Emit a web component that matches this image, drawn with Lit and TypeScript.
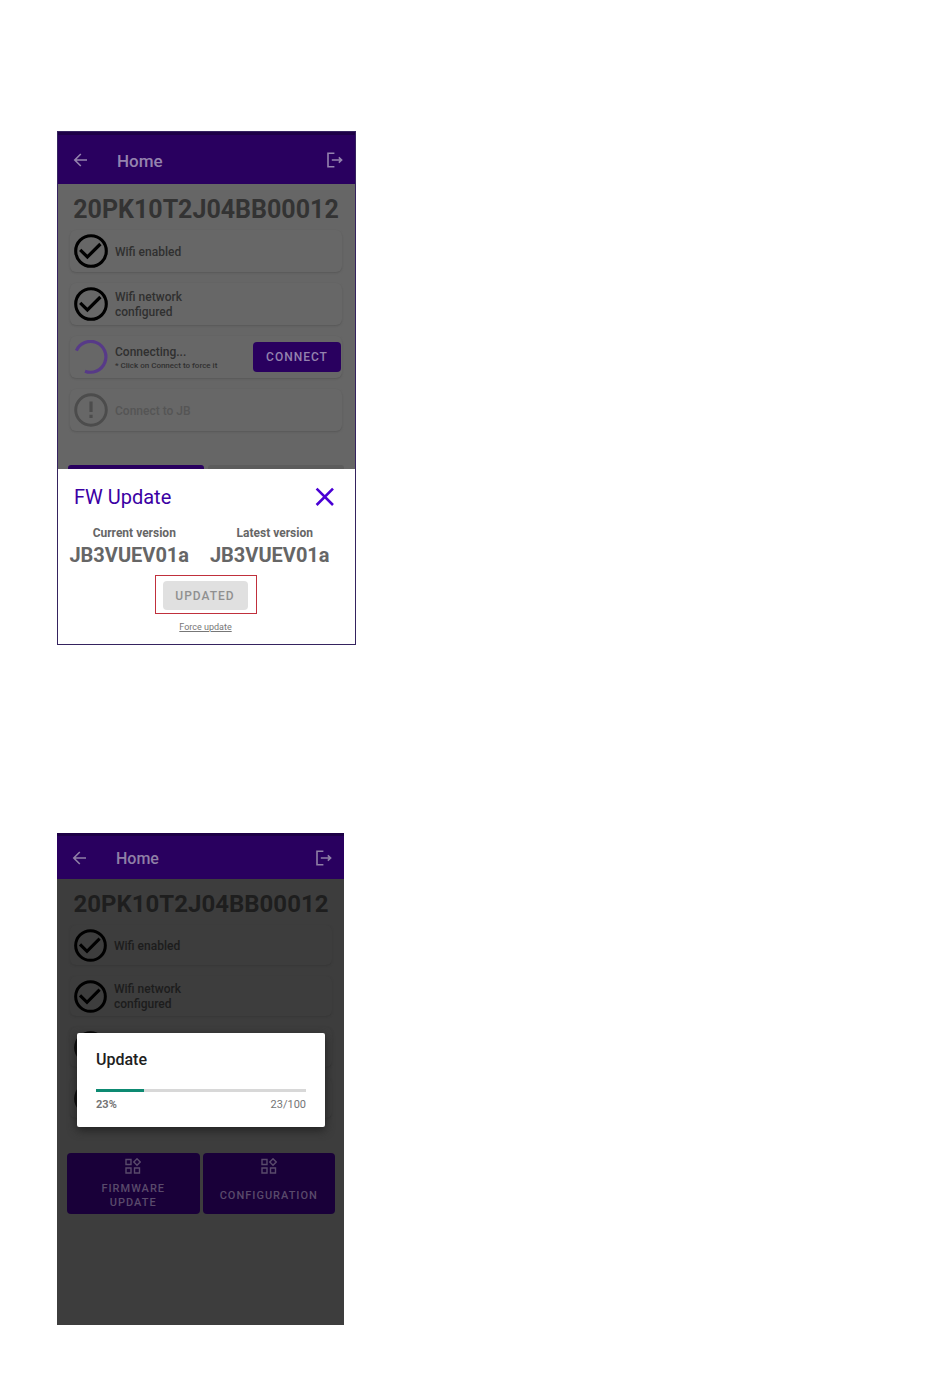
import { LitElement, html, css } from "lit";
import { customElement, property } from "lit/decorators.js";

const checkIcon = html`<svg class="state" viewBox="0 0 34 34" aria-hidden="true">
  <circle cx="17" cy="17" r="15.3" fill="none" stroke="#000" stroke-width="3.1" />
  <path d="M6.2 15.8 L13.4 23 L26.4 10" fill="none" stroke="#000" stroke-width="3.2" />
</svg>`;

const spinnerIcon = html`<svg class="state" viewBox="0 0 34 34" aria-hidden="true">
  <path d="M2.4 10.6 A15.4 15.4 0 1 1 11 31.2" fill="none" stroke="#573a88" stroke-width="3.2" />
</svg>`;

const alertIcon = html`<svg class="state" viewBox="0 0 34 34" aria-hidden="true">
  <circle cx="17" cy="17" r="15.3" fill="none" stroke="#4c4c4c" stroke-width="2.9" />
  <path d="M17 8.6 V19 M17 21.8 V25" fill="none" stroke="#4c4c4c" stroke-width="3.2" />
</svg>`;

const backIcon = html`<svg class="icon" viewBox="0 0 16 16" aria-hidden="true">
  <path d="M14 8 H2 M7.8 2 L1.8 8 L7.8 14" fill="none" stroke="currentColor" stroke-width="1.6" />
</svg>`;

const exitIcon = html`<svg class="icon" viewBox="0 0 16 16" aria-hidden="true">
  <path d="M7.4 1.2 H1 V14.8 H7.4 M4.8 8 H14 M11.8 5.4 L14.6 8 L11.8 10.6" fill="none" stroke="currentColor" stroke-width="1.6" />
</svg>`;

const widgetsIcon = html`<svg class="icon" viewBox="0 0 16 16" aria-hidden="true">
  <path d="M1 1.5 H6 V6.5 H1 Z M1 10 H6 V15 H1 Z M9.5 10 H14.5 V15 H9.5 Z M12 0.8 L15.2 4 L12 7.2 L8.8 4 Z" fill="none" stroke="currentColor" stroke-width="1.4" />
</svg>`;

const base = css`
  :host {
    display: block;
    font-family: Roboto, "Liberation Sans", sans-serif;
  }
  *, *::before, *::after {
    box-sizing: border-box;
  }
  button {
    font: inherit;
    border: 0;
    padding: 0;
    margin: 0;
    background: none;
    color: inherit;
  }
  h1, h2, p {
    margin: 0;
  }
`;

@customElement("app-header")
class AppHeader extends LitElement {
  static styles = [
    base,
    css`
      .bar {
        display: flex;
        align-items: center;
        height: var(--bar-height);
        padding: 1px 12px 0 15px;
        border-top: 3px solid #1d0046;
        background: #29005f;
        color: var(--bar-ink);
      }
      h1 {
        flex: 1;
        padding: 1px 0 0 28px;
        font-size: var(--bar-size);
        font-weight: 500;
        line-height: 20px;
      }
      button {
        display: flex;
      }
      .icon {
        width: 16px;
        height: 16px;
      }
    `,
  ];

  render() {
    return html`<header class="bar">
      <button aria-label="Back">${backIcon}</button>
      <h1>Home</h1>
      <button aria-label="Log out">${exitIcon}</button>
    </header>`;
  }
}

@customElement("status-card")
class StatusCard extends LitElement {
  @property() kind = "done";
  @property() label = "";
  @property() hint = "";
  @property() action = "";

  static styles = [
    base,
    css`
      .card {
        display: flex;
        align-items: center;
        gap: 7px;
        height: var(--card-height);
        padding: 0 1px 0 4px;
        border-radius: 6px;
        background: var(--card-fill);
        box-shadow: 0 1px 2px var(--card-shade);
        color: var(--card-ink);
      }
      .state {
        flex: none;
        width: var(--state-size);
        height: var(--state-size);
      }
      .text {
        flex: 1;
        padding-top: 2px;
      }
      .label {
        max-width: 90px;
        font-size: 12px;
        font-weight: 500;
        line-height: 15px;
      }
      .hint {
        font-size: 8px;
        font-weight: 500;
        line-height: 12px;
        white-space: nowrap;
      }
      .waiting .label {
        color: #555;
      }
      .action {
        width: 88px;
        height: 30px;
        border-radius: 4px;
        background: #29005f;
        color: #9483ae;
        font-size: 12px;
        font-weight: 500;
        letter-spacing: 1px;
      }
    `,
  ];

  render() {
    const icon = this.kind === "busy" ? spinnerIcon : this.kind === "waiting" ? alertIcon : checkIcon;
    return html`<div class="card ${this.kind}">
      ${icon}
      <div class="text">
        <p class="label">${this.label}</p>
        ${this.hint ? html`<p class="hint">${this.hint}</p>` : ""}
      </div>
      ${this.action ? html`<button class="action">${this.action}</button>` : ""}
    </div>`;
  }
}

@customElement("firmware-screen")
class FirmwareScreen extends LitElement {
  static styles = [
    base,
    css`
      :host {
        --bar-height: 52px;
        --bar-ink: #9483ae;
        --bar-size: 17px;
        --card-height: 42px;
        --card-fill: #676767;
        --card-shade: #575757;
        --card-ink: #303030;
        --state-size: 34px;
      }
      .screen {
        border: 1px solid #35235f;
        background: #fff;
      }
      .content {
        padding: 9px 13px 0 12px;
        background: #666;
      }
      .serial {
        font-size: 25px;
        font-weight: 700;
        line-height: 34px;
        text-align: center;
        color: #333;
      }
      .cards {
        display: grid;
        gap: 11px;
        padding-top: 3px;
      }
      .tiles {
        display: grid;
        grid-template-columns: 1fr 1fr;
        gap: 4px;
        margin: 34px -2px 0;
      }
      .tile {
        height: 4px;
        border-radius: 3px 3px 0 0;
        background: #29005f;
      }
      .tile.off {
        background: #5c5c5c;
      }
      .sheet {
        padding: 16px 16px 11px;
      }
      .top {
        display: flex;
        align-items: center;
        justify-content: space-between;
        color: #3b00a4;
      }
      .top h2 {
        font-size: 20px;
        font-weight: 400;
        line-height: 24px;
      }
      .close {
        display: flex;
        margin-right: 4px;
      }
      .close svg {
        width: 20px;
        height: 20px;
      }
      .versions {
        display: grid;
        grid-template-columns: 1fr 1fr;
        margin: 15px 0 0 -16px;
        text-align: center;
        color: #666;
      }
      .name {
        padding-left: 12px;
        font-size: 12px;
        font-weight: 700;
        line-height: 18px;
      }
      .value {
        padding-left: 2px;
        font-size: 20px;
        font-weight: 700;
        line-height: 26px;
      }
      .update {
        display: flex;
        flex-direction: column;
        align-items: center;
        gap: 7px;
        padding: 7px 2px 0 0;
      }
      .mark {
        padding: 5px 8px 3px 7px;
        border: 1px solid #c0303c;
      }
      .mark button {
        display: block;
        width: 85px;
        height: 29px;
        border-radius: 4px;
        background: #e0e0e0;
        color: #909090;
        font-size: 12px;
        font-weight: 500;
        letter-spacing: 1px;
      }
      .force {
        color: #777;
        font-size: 9px;
        line-height: 12px;
      }
    `,
  ];

  render() {
    return html`<section class="screen">
      <app-header></app-header>
      <div class="content">
        <p class="serial">20PK10T2J04BB00012</p>
        <div class="cards">
          <status-card label="Wifi enabled"></status-card>
          <status-card label="Wifi network configured"></status-card>
          <status-card kind="busy" label="Connecting..." hint="* Click on Connect to force it" action="CONNECT"></status-card>
          <status-card kind="waiting" label="Connect to JB"></status-card>
        </div>
        <div class="tiles">
          <div class="tile"></div>
          <div class="tile off"></div>
        </div>
      </div>
      <div class="sheet">
        <div class="top">
          <h2>FW Update</h2>
          <button class="close" aria-label="Close">
            <svg viewBox="0 0 20 20" aria-hidden="true">
              <path d="M1.6 1.6 L18 18 M18 1.6 L1.6 18" fill="none" stroke="#4a00d4" stroke-width="2.6" />
            </svg>
          </button>
        </div>
        <div class="versions">
          <div><p class="name">Current version</p><p class="value">JB3VUEV01a</p></div>
          <div><p class="name">Latest version</p><p class="value">JB3VUEV01a</p></div>
        </div>
        <div class="update">
          <div class="mark"><button disabled>UPDATED</button></div>
          <a class="force" href="#">Force update</a>
        </div>
      </div>
    </section>`;
  }
}

@customElement("progress-screen")
class ProgressScreen extends LitElement {
  @property({ type: Number }) value = 23;

  static styles = [
    base,
    css`
      :host {
        --bar-height: 46px;
        --bar-ink: #8f7fa6;
        --bar-size: 16px;
        --card-height: 40px;
        --card-fill: #3d3d3d;
        --card-shade: #373737;
        --card-ink: #1c1c1c;
        --state-size: 33px;
      }
      .screen {
        position: relative;
        padding-bottom: 111px;
        background: #3d3d3d;
      }
      .content {
        padding: 8px 12px 0 13px;
      }
      .serial {
        font-size: 24px;
        font-weight: 700;
        line-height: 34px;
        text-align: center;
        color: #1e1e1e;
      }
      .cards {
        display: grid;
        gap: 11px;
        padding-top: 4px;
      }
      .tiles {
        display: grid;
        grid-template-columns: repeat(2, minmax(0, 1fr));
        gap: 3px;
        margin: 35px -3px 0;
      }
      .tile {
        display: flex;
        flex-direction: column;
        align-items: center;
        height: 61px;
        padding: 5px 14px 4px;
        border-radius: 4px;
        background: #190039;
        color: #594a6b;
        font-size: 11px;
        font-weight: 500;
        letter-spacing: 1px;
        line-height: 14px;
      }
      .tile span {
        display: flex;
        align-items: center;
        flex: 1;
        max-width: 104px;
        padding-top: 8px;
      }
      .icon {
        flex: none;
        width: 16px;
        height: 16px;
      }
      .dialog {
        position: absolute;
        top: 200px;
        left: 20px;
        right: 19px;
        padding: 17px 19px 15px;
        border-radius: 2px;
        background: #fff;
        box-shadow: 0 3px 10px #202020;
      }
      .dialog h2 {
        font-size: 16px;
        font-weight: 500;
        line-height: 20px;
        color: #202020;
      }
      .track {
        height: 3px;
        margin-top: 19px;
        background: #d8d8d8;
      }
      .fill {
        height: 3px;
        background: #0d8a72;
      }
      .counts {
        display: flex;
        justify-content: space-between;
        padding-top: 5px;
        color: #757575;
        font-size: 11px;
        line-height: 15px;
      }
      .percent {
        font-weight: 700;
      }
    `,
  ];

  render() {
    return html`<section class="screen">
      <app-header></app-header>
      <div class="content">
        <p class="serial">20PK10T2J04BB00012</p>
        <div class="cards">
          <status-card label="Wifi enabled"></status-card>
          <status-card label="Wifi network configured"></status-card>
          <status-card></status-card>
          <status-card></status-card>
        </div>
        <div class="tiles">
          <button class="tile">${widgetsIcon}<span>FIRMWARE UPDATE</span></button>
          <button class="tile">${widgetsIcon}<span>CONFIGURATION</span></button>
        </div>
      </div>
      <div class="dialog" role="dialog" aria-label="Update">
        <h2>Update</h2>
        <div class="track" role="progressbar" aria-label="Update progress" aria-valuenow=${this.value} aria-valuemax="100">
          <div class="fill" style="width:${this.value}%"></div>
        </div>
        <div class="counts">
          <span class="percent">${this.value}%</span>
          <span>${this.value}/100</span>
        </div>
      </div>
    </section>`;
  }
}

@customElement("app-root")
class AppRoot extends LitElement {
  static styles = css`
    :host {
      display: block;
      background: #fff;
    }
    .page {
      display: flex;
      flex-direction: column;
      gap: 188px;
      padding: 131px 57px 53px;
    }
    firmware-screen {
      width: 100%;
      max-width: 299px;
    }
    progress-screen {
      width: 100%;
      max-width: 287px;
    }
  `;

  render() {
    return html`<main class="page">
      <firmware-screen></firmware-screen>
      <progress-screen></progress-screen>
    </main>`;
  }
}
